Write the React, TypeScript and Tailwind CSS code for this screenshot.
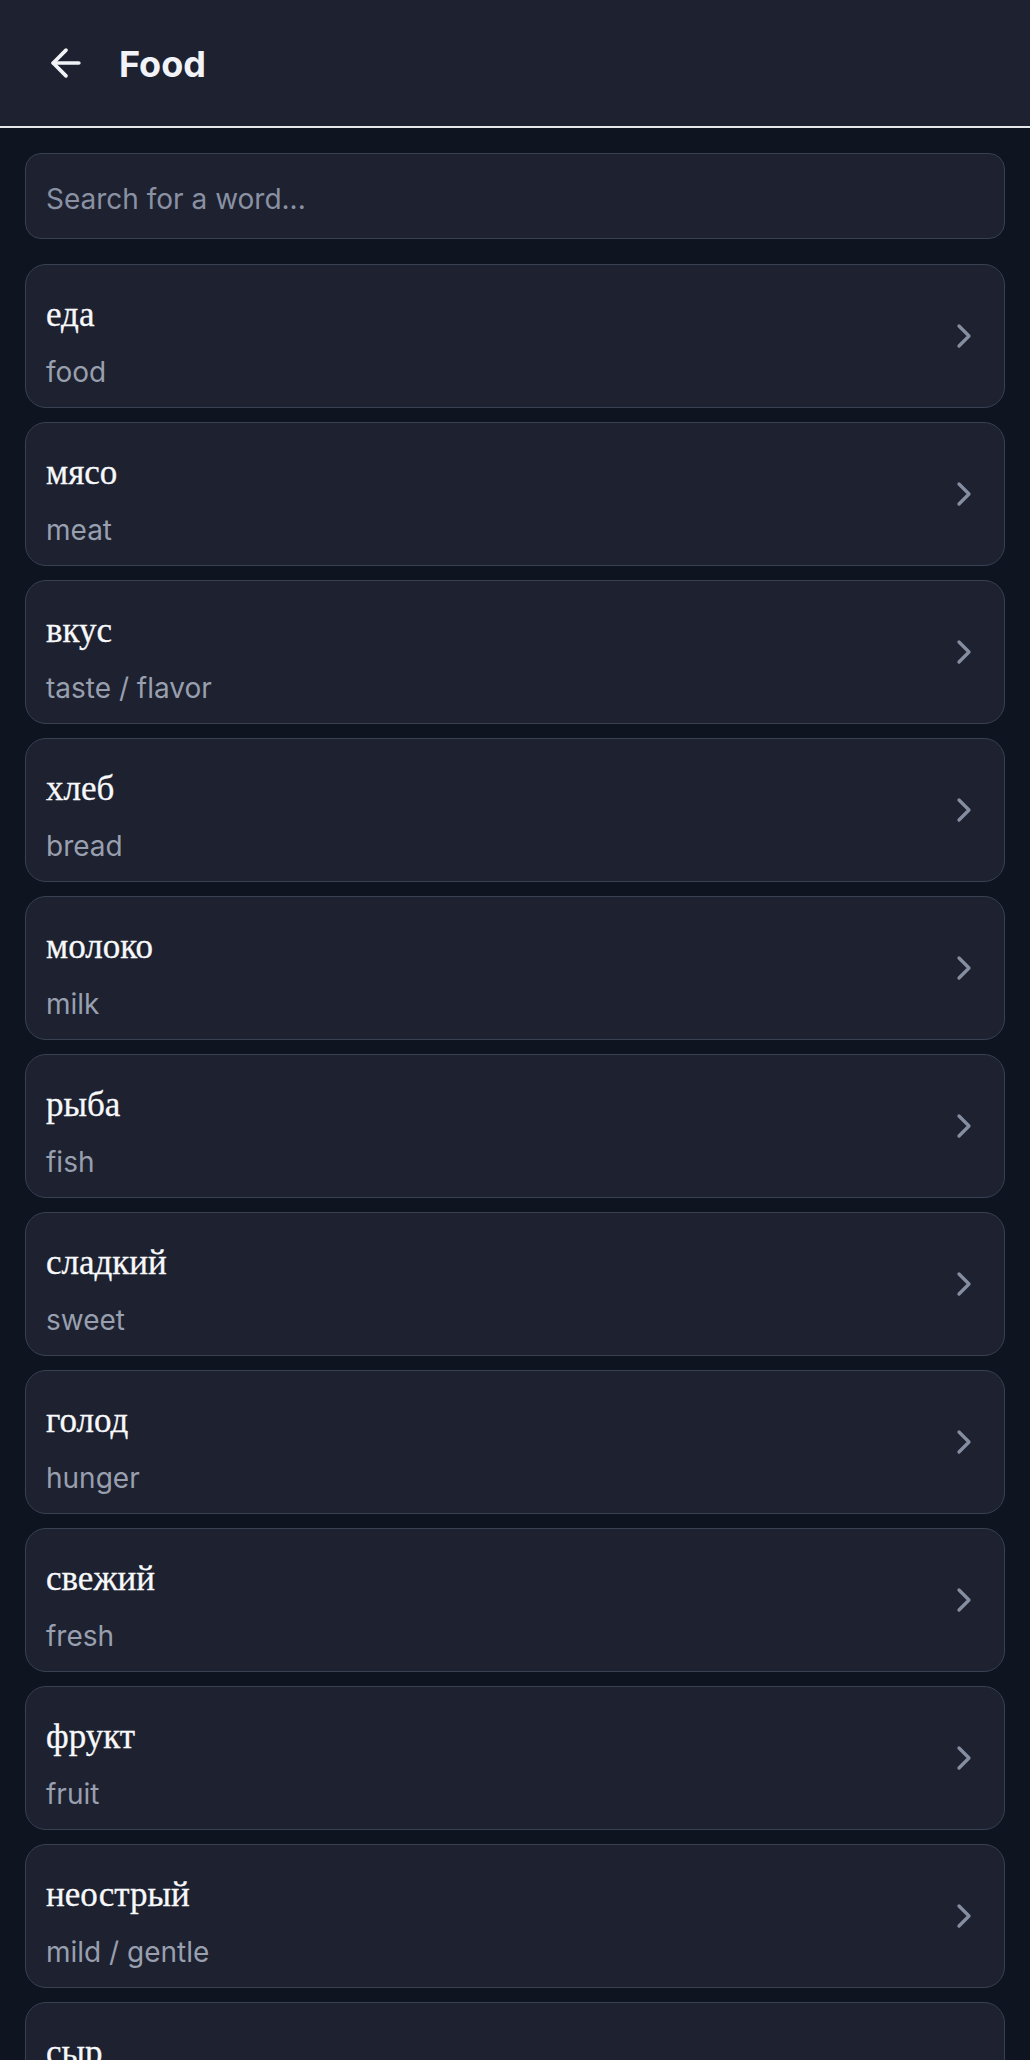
import React from "react";
import { ArrowLeft, ChevronRight } from "lucide-react";

const words: { ru: string; en: string }[] = [
  { ru: "еда", en: "food" },
  { ru: "мясо", en: "meat" },
  { ru: "вкус", en: "taste / flavor" },
  { ru: "хлеб", en: "bread" },
  { ru: "молоко", en: "milk" },
  { ru: "рыба", en: "fish" },
  { ru: "сладкий", en: "sweet" },
  { ru: "голод", en: "hunger" },
  { ru: "свежий", en: "fresh" },
  { ru: "фрукт", en: "fruit" },
  { ru: "неострый", en: "mild / gentle" },
  { ru: "сыр", en: "cheese" },
];

export default function App() {
  return (
    <div className="min-h-screen bg-[#0f1421] font-['Inter',sans-serif]">
      <header className="h-[128px] bg-[#1d2130] border-b-2 border-[#e4e6ea] flex items-center pl-[44px]">
        <ArrowLeft size={44} strokeWidth={2} className="text-[#f1f3f7]" />
        <h1 className="ml-[31px] mt-[2px] text-[36px] font-bold text-[#f1f3f8] leading-none">Food</h1>
      </header>
      <main className="px-[25px] pt-[25px] pb-10">
        <div className="h-[86px] rounded-[16px] border border-[#394052] bg-[#1d2130] flex items-center px-[20px] pt-[5px]">
          <input
            type="text"
            placeholder="Search for a word..."
            className="w-full bg-transparent outline-none text-[28px] text-[#e5e7eb] placeholder:text-[#8a91a3] font-['Inter',sans-serif]"
          />
        </div>
        <div className="mt-[25px] flex flex-col gap-[14px]">
          {words.map((w) => (
            <div
              key={w.ru}
              className="h-[144px] rounded-[21px] border border-[#394052] bg-[#1d2130] flex items-stretch justify-between pl-[20px] pr-[20px]"
            >
              <div className="flex flex-col pt-[30px]">
                <div className="text-[35px] leading-[40px] text-[#f7f8fa] font-['Liberation_Serif',serif] [-webkit-text-stroke:0.3px_#f7f8fa]">
                  {w.ru}
                </div>
                <div className="mt-[20px] text-[28px] leading-[34px] text-[#989fae]">{w.en}</div>
              </div>
              <div className="flex items-center">
                <ChevronRight size={40} strokeWidth={2} className="text-[#858da0]" />
              </div>
            </div>
          ))}
        </div>
      </main>
    </div>
  );
}
